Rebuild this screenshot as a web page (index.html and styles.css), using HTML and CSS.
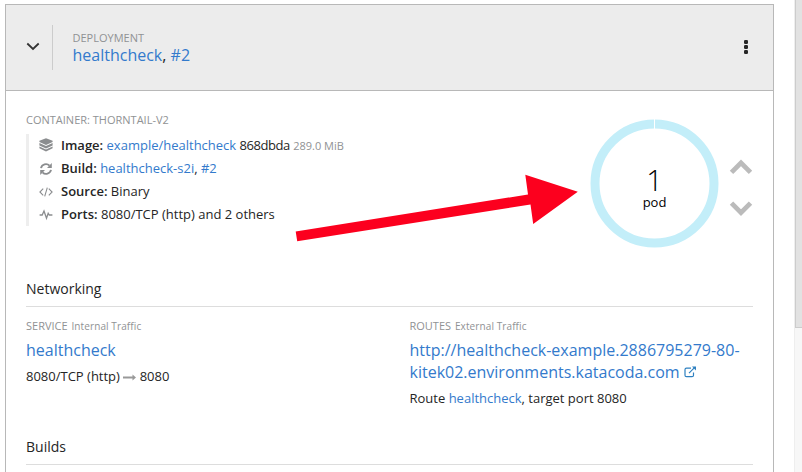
FILE: index.html
```html
<!DOCTYPE html>
<html lang="en">
<head>
<meta charset="utf-8">
<title>healthcheck deployment</title>
<link rel="stylesheet" href="styles.css">
</head>
<body>
<div class="page">
  <main class="card">
    <header class="head">
      <svg class="toggle" width="14" height="9" viewBox="0 0 14 9"><path d="M1.300 1.500 7 6.900l5.700-5.400" fill="none" stroke="#333" stroke-width="1.800"/></svg>
      <div class="title">
        <div class="label">DEPLOYMENT</div>
        <div class="name"><a>healthcheck</a>, <a>#2</a></div>
      </div>
      <svg class="kebab" width="6" height="16" viewBox="0 0 6 16" fill="#252525"><rect x="1" y="1" width="4" height="4" rx="1.300"/><rect x="1" y="6" width="4" height="4" rx="1.300"/><rect x="1" y="11" width="4" height="4" rx="1.300"/></svg>
    </header>
    <section class="overview">
      <div class="container">
        <div class="label">CONTAINER: THORNTAIL-V2</div>
        <ul class="facts">
          <li>
            <svg class="layers" width="14" height="14" viewBox="0 0 14 14" fill="#8b8d8f"><path d="M7 .3 13.600 2.800V4L7 7 .4 4V2.800z"/><path d="M.4 5 7 8 13.600 5v2.400L7 10.400.4 7.400z"/><path d="M.4 8.400 7 11.400l6.600-3v1.800L7 13.500.4 10.200z"/></svg>
            <span><b>Image:</b> <a>example/healthcheck</a> <span class="hash">868dbda</span> <small>289.0 MiB</small></span>
          </li>
          <li>
            <svg width="14" height="14" viewBox="0 0 14 14"><path d="M2 6.100A5 5 0 0 1 10.500 3.700M12 7.900A5 5 0 0 1 3.500 10.300" fill="none" stroke="#8b8d8f" stroke-width="1.900"/><path d="M12.800 1v5H8zM1.200 13V8H6z" fill="#8b8d8f"/></svg>
            <span><b>Build:</b> <a>healthcheck-s2i</a>, <a>#2</a></span>
          </li>
          <li>
            <svg width="14" height="14" viewBox="0 0 14 14" fill="none" stroke="#8b8d8f" stroke-width="1.100"><path d="M4.200 3.600.9 7l3.300 3.400M9.800 3.600 13.100 7l-3.300 3.400M8.300 2.600 5.700 11.400"/></svg>
            <span><b>Source:</b> Binary</span>
          </li>
          <li>
            <svg width="14" height="14" viewBox="0 0 14 14" fill="none" stroke="#8b8d8f" stroke-width="1.300"><path d="M.6 7H3.200L5 3 7.500 10.200 9.200 5.200 10.300 7H13.400"/></svg>
            <span><b>Ports:</b> 8080/TCP (http) and 2 others</span>
          </li>
        </ul>
      </div>
      <div class="pods">
        <div class="donut">
          <svg class="ring" width="130" height="130" viewBox="0 0 130 130"><circle cx="64.500" cy="65.500" r="59.500" fill="none" stroke="#c3eef9" stroke-width="9"/><path d="M64.500 0v11" stroke="#fff" stroke-width="1"/></svg>
          <div class="count">1</div>
          <div class="unit">pod</div>
        </div>
        <svg class="scale" width="24" height="58" viewBox="0 0 24 58" fill="none" stroke="#bbb" stroke-width="4.800"><path d="M2.500 13.400 12 3.900l9.500 9.500M2.500 44.100 12 53.600l9.500-9.500"/></svg>
      </div>
    </section>
    <h2>Networking</h2>
    <section class="network">
      <div>
        <div class="label">SERVICE <small>Internal Traffic</small></div>
        <div class="big"><a>healthcheck</a></div>
        <p>8080/TCP (http) <svg width="13" height="7" viewBox="0 0 13 7"><path d="M0 2.600h9.500V.6L13 3.500 9.500 6.400V4.400H0z" fill="#999"/></svg> 8080</p>
      </div>
      <div>
        <div class="label">ROUTES <small>External Traffic</small></div>
        <div class="big"><a>http://healthcheck-example.2886795279-80-<br>kitek02.environments.katacoda.com <svg width="13" height="12" viewBox="0 0 13 12" fill="none" stroke="#2e80c0" stroke-width="1.200"><path d="M7 2.200H2.500Q1 2.200 1 3.700v5.500q0 1.500 1.500 1.500H8q1.500 0 1.500-1.500V6.500M5 7.200l5.500-5.500"/><path d="M8 .6h4v4z" fill="#2e80c0" stroke="none"/></svg></a></div>
        <p>Route <a>healthcheck</a>, target port 8080</p>
      </div>
    </section>
    <h2>Builds</h2>
  </main>
  <div class="scrollbar"><div class="thumb"></div></div>
</div>
<svg class="pointer" width="286" height="72" viewBox="0 0 286 72"><path d="M-.3 56.500 232 19.500 229.300-.2 281.800 16.800 237.200 49 234.500 29.500 1.200 66.300z" fill="#fc001e"/></svg>
</body>
</html>
```
FILE: styles.css
```css
* { box-sizing: border-box; }
body { margin: 0; overflow: hidden; background: #fff; color: #252525; font: 13px/23px "Open Sans", "Noto Sans", sans-serif; }
a { color: #337acc; }
b { font-weight: 600; }
p { margin: 0; }
svg { flex: none; }
.page { display: flex; justify-content: space-between; height: 472px; padding-left: 5px; }
.card { width: 769px; height: 480px; margin-top: 4px; border: 1px solid #b8b8b8; white-space: nowrap; }
.head { display: flex; height: 86px; background: #ececec; border-bottom: 1px solid #b8b8b8; }
.toggle { margin: 37px 12px 0 20px; }
.title { height: 45px; margin-top: 20px; padding: 4px 0 0 19.500px; border-left: 1px solid #ccc; }
.label { color: #909294; font-size: 11px; line-height: 18px; }
.name { font-size: 16px; line-height: 16px; }
.kebab { margin: 34px 24px 0 auto; }
.overview { display: flex; justify-content: space-between; height: 178px; padding: 20px 19px 0 20px; }
.facts { margin: 5px 0 0; padding: 0 0 0 10px; border-left: 3px solid #eee; list-style: none; }
.facts li { display: flex; align-items: center; gap: 8px; height: 23px; }
.facts small { color: #909294; font-size: 11px; }
.layers { margin-top: -2px; }
.hash { letter-spacing: -.45px; }
.pods { display: flex; gap: 9px; padding-top: 7px; }
.donut { position: relative; width: 130px; height: 130px; padding-right: 1px; color: #000; text-align: center; }
.ring { position: absolute; inset: 0; }
.count { padding-top: 47px; font-size: 29px; font-weight: 300; line-height: 30px; }
.unit { line-height: 14px; }
.scale { margin: 41px 1px 0 0; }
h2 { display: flex; align-items: center; height: 38px; margin: 0 20px; padding-top: 2px; border-bottom: 1px solid #ddd; font-size: 14px; font-weight: 400; }
.network { display: grid; grid-template-columns: 383.500px 1fr; height: 120px; padding: 10px 20px 0; }
.network small { margin-left: 1px; font-size: 10px; letter-spacing: .1px; }
.big { margin: 4px 0; font-size: 16px; line-height: 22px; }
.scrollbar { width: 8px; height: 472px; background: #f7f7f7; border-left: 1px solid #eee; }
.thumb { height: 328px; background: #e2e2e2; border: solid #ccc; border-width: 0 0 1px 1px; }
.pointer { position: absolute; left: 296px; top: 175px; overflow: visible; }
```
